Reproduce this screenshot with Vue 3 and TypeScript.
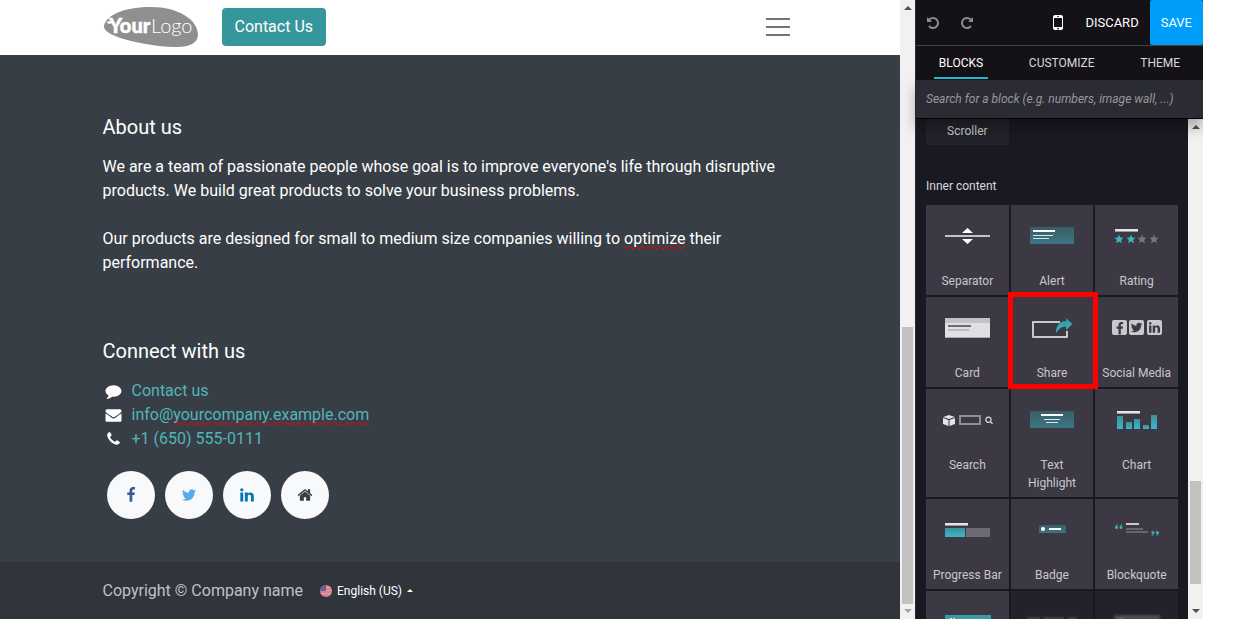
<script setup lang="ts">
import { ref } from 'vue'

interface Block {
  id: string
  label: string
  disabled?: boolean
}

const tabs = ['BLOCKS', 'CUSTOMIZE', 'THEME']
const activeTab = ref('BLOCKS')
const query = ref('')
const selected = 'share'

const blocks: Block[] = [
  { id: 'separator', label: 'Separator' },
  { id: 'alert', label: 'Alert' },
  { id: 'rating', label: 'Rating' },
  { id: 'card', label: 'Card' },
  { id: 'share', label: 'Share' },
  { id: 'social', label: 'Social Media' },
  { id: 'search', label: 'Search' },
  { id: 'highlight', label: 'Text Highlight' },
  { id: 'chart', label: 'Chart' },
  { id: 'progress', label: 'Progress Bar' },
  { id: 'badge', label: 'Badge' },
  { id: 'quote', label: 'Blockquote' },
  { id: 'banner', label: '' },
  { id: 'locked-a', label: '', disabled: true },
  { id: 'locked-b', label: '', disabled: true },
]

const icons = {
  comment:
    'M1792 896q0 174-120 321.5t-326 233-450 85.5q-70 0-145-8-198 175-460 242-49 14-114 22-17 2-30.5-9t-17.5-29v-1q-3-4-.5-12t2-10 4.5-9.5l6-9 7-8.5 8-9q7-8 31-34.5t34.5-38 31-39.5 32.5-51 27-59 26-76q-157-89-247.5-220t-90.5-281q0-130 71-248.500t191-204.500 286-136.500 348-50.500q244 0 450 85.500t326 233 120 321.500z',
  envelope:
    'M1792 710v794q0 66-47 113t-113 47h-1472q-66 0-113-47t-47-113v-794q44 49 101 87 362 246 497 345 57 42 92.500 65.500t94.500 48 110 24.500h2q51 0 110-24.500t94.500-48 92.500-65.500q170-123 498-345 57-39 100-87zm0-294q0 79-49 151t-122 123q-376 261-468 325-10 7-42.500 31t-54 38.500-52 32.500-57.500 27-50 9h-2q-23 0-50-9t-57.500-27-52-32.500-54-38.500-42.500-31q-91-64-262-182.500t-205-142.500q-62-42-117-115.500t-55-136.500q0-78 41.500-130t118.500-52h1472q65 0 112.500 47t47.500 113z',
  phone:
    'M1600 1240q0 27-10 70.500t-21 68.500q-21 50-122 106-94 51-186 51-27 0-53-3.500t-57.500-12.500-47-14.500-55.500-20.500-49-18q-98-35-175-83-127-79-264-216t-216-264q-48-77-83-175-3-9-18-49t-20.500-55.500-14.500-47-12.500-57.500-3.500-53q0-92 51-186 56-101 106-122 25-11 68.500-21t70.500-10q14 0 21 3 18 6 53 76 11 19 30 54t35 63.500 31 53.500q3 4 17.500 25t21.500 35.500 7 28.500q0 20-28.500 50t-62 55-62 53-28.500 46q0 9 5 22.500t8.500 20.500 14 24 11.500 19q76 137 174 235t235 174q2 1 19 11.500t24 14 20.500 8.500 22.500 5q18 0 46-28.500t53-62 55-62 50-28.500q14 0 28.500 7t35.500 21.500 25 17.500q25 15 53.500 31t63.500 35 54 30q70 35 76 53 3 7 3 21z',
  facebook:
    'M1343 12v264h-157q-86 0-116 36t-30 108v189h293l-39 296h-254v759h-306v-759h-255v-296h255v-218q0-186 104-288.500t277-102.500q147 0 228 12z',
  twitter:
    'M1684 408q-67 98-162 167 1 14 1 42 0 130-38 259.500t-115.500 248.500-184.500 210.500-258 146-323 54.500q-271 0-496-145 35 4 78 4 225 0 401-138-105-2-188-64.500t-114-159.500q33 5 61 5 43 0 85-11-112-23-185.500-111.500t-73.500-205.500v-4q68 38 146 41-66-44-105-115t-39-154q0-88 44-163 121 149 294.500 238.500t371.500 99.500q-8-38-8-74 0-134 94.500-228.500t228.500-94.500q140 0 236 102 109-21 205-78-37 115-142 178 93-10 186-50z',
  linkedin:
    'M477 625v991h-330v-991h330zm21-306q1 73-50.500 122t-135.500 49h-2q-82 0-132-49t-50-122q0-74 51.500-122.500t134.500-48.500 133 48.500 51 122.500zm1166 729v568h-329v-530q0-105-40.500-164.500t-126.500-59.500q-63 0-105.500 34.500t-63.500 85.500q-11 30-11 81v553h-329q2-399 2-647t-1-296l-1-48h329v144h-2q20-32 41-56t56.500-52 87-43.500 114.500-15.500q171 0 275 113.500t104 332.500z',
  home:
    'M1472 992v480q0 26-19 45t-45 19h-384v-384h-256v384h-384q-26 0-45-19t-19-45v-480q0-1 .5-3t.5-3l575-474 575 474q1 2 1 6zm223-69l-62 74q-8 9-21 11h-3q-13 0-21-7l-692-577-692 577q-12 8-24 7-13-2-21-11l-62-74q-8-10-7-23.500t11-21.500l719-599q32-26 76-26t76 26l244 204v-195q0-14 9-23t23-9h192q14 0 23 9t9 23v408l219 182q10 8 11 21.500t-7 23.500z',
  undo:
    'M1664 896q0 156-61 298t-164 245-245 164-298 61q-172 0-327-72.500t-264-204.500q-7-10-6.500-22.500t8.500-20.500l137-138q10-9 25-9 16 2 23 12 73 95 179 147t225 52q104 0 198.500-40.500t163.500-109.500 109.500-163.500 40.500-198.500-40.500-198.500-109.500-163.500-163.500-109.500-198.500-40.500q-98 0-188 35.500t-160 101.500l137 138q31 30 14 69-17 40-59 40h-448q-26 0-45-19t-19-45v-448q0-42 40-59 39-17 69 14l130 129q107-101 244.500-156.500t284.500-55.500q156 0 298 61t245 164 164 245 61 298z',
  search:
    'M1216 832q0-185-131.500-316.500t-316.500-131.500-316.500 131.500-131.500 316.500 131.500 316.500 316.500 131.500 316.500-131.500 131.500-316.500zm512 832q0 52-38 90t-90 38q-54 0-90-38l-343-342q-179 124-399 124-143 0-273.500-55.500t-225-150-150-225-55.500-273.500 55.500-273.500 150-225 225-150 273.500-55.500 273.500 55.500 225 150 150 225 55.500 273.500q0 220-124 399l343 343q37 37 37 90z',
}

const socials = [
  { name: 'Facebook', path: icons.facebook, color: '#3b5998' },
  { name: 'Twitter', path: icons.twitter, color: '#55acee' },
  { name: 'LinkedIn', path: icons.linkedin, color: '#0976b4' },
  { name: 'Home', path: icons.home, color: '#383e45' },
]

const stars = [24, 36, 47, 59]
const bars = [
  { x: 22, top: 27 },
  { x: 31, top: 33 },
  { x: 39, top: 30 },
  { x: 48, top: 36 },
  { x: 56, top: 26 },
]
</script>

<template>
  <div class="app">
    <div class="site">
      <header class="site-header">
        <div class="container nav">
          <a href="#" class="logo" aria-label="Your Logo">
            <svg width="95" height="42" viewBox="0 0 95 42">
              <path
                d="M1 20C3 8 24 1 48 1c28 0 47 13 47 28 0 8-9 12-20 12C48 41-1 31 1 20z"
                fill="#8f8f8f"
              />
              <path d="M3 16l4-1 3 2-4 1z" fill="#fff" />
              <text x="6" y="27" class="logo-bold">Your</text>
              <text x="48" y="27" class="logo-light">Logo</text>
            </svg>
          </a>
          <a href="#contact" class="cta">Contact Us</a>
          <button class="burger" type="button" aria-label="Menu"><i /><i /><i /></button>
        </div>
      </header>

      <main class="site-main">
        <div class="container">
          <section class="about">
            <h2>About us</h2>
            <p>
              We are a team of passionate people whose goal is to improve everyone's life through
              disruptive products. We build great products to solve your business problems.
            </p>
            <p>
              Our products are designed for small to medium size companies willing to
              <span class="misspelt">optimize</span> their performance.
            </p>
          </section>
          <section>
            <h2>Connect with us</h2>
            <ul class="contacts">
              <li>
                <svg viewBox="0 0 1792 1792"><path :d="icons.comment" /></svg>
                <a href="#contact">Contact us</a>
              </li>
              <li>
                <svg viewBox="0 0 1792 1792"><path :d="icons.envelope" /></svg>
                <a href="#mail">info@<span class="misspelt">yourcompany.example.com</span></a>
              </li>
              <li>
                <svg viewBox="0 0 1792 1792"><path :d="icons.phone" /></svg>
                <a href="#phone">+1 (650) 555-0111</a>
              </li>
            </ul>
            <div class="socials">
              <a v-for="s in socials" :key="s.name" href="#" :aria-label="s.name">
                <svg viewBox="0 0 1792 1792"><path :d="s.path" :fill="s.color" /></svg>
              </a>
            </div>
          </section>
        </div>
      </main>

      <footer class="site-footer">
        <div class="container legal">
          <span>Copyright © Company name</span>
          <button class="lang" type="button">
            <svg class="flag" viewBox="0 0 12 12">
              <clipPath id="flag-clip"><circle cx="6" cy="6" r="6" /></clipPath>
              <g clip-path="url(#flag-clip)">
                <rect width="12" height="12" fill="#dd7f8a" />
                <path d="M0 2.500h12M0 5.500h12M0 8.500h12" stroke="#dfa5ad" />
                <rect width="6" height="6" fill="#62648f" />
              </g>
            </svg>
            English (US)
            <svg class="caret" viewBox="0 0 6 3"><path d="M0 3l3-3 3 3z" fill="#fff" /></svg>
          </button>
        </div>
      </footer>
    </div>

    <div class="scrollbar" aria-hidden="true">
      <svg viewBox="0 0 8 4"><path d="M0 4l4-4 4 4z" /></svg>
      <div class="track site-track"><i /></div>
      <svg viewBox="0 0 8 4" class="dim"><path d="M0 0l4 4 4-4z" /></svg>
    </div>

    <aside class="editor">
      <div class="toolbar">
        <button class="tool" type="button" aria-label="Undo">
          <svg viewBox="0 0 1792 1792"><path :d="icons.undo" /></svg>
        </button>
        <button class="tool" type="button" aria-label="Redo">
          <svg viewBox="0 0 1792 1792" class="flip"><path :d="icons.undo" /></svg>
        </button>
        <button class="device" type="button" aria-label="Mobile preview">
          <svg viewBox="0 0 10 15">
            <path
              fill-rule="evenodd"
              d="M2 0h6a2 2 0 0 1 2 2v11a2 2 0 0 1-2 2H2a2 2 0 0 1-2-2V2a2 2 0 0 1 2-2zM1 3v9h8V3zM4 1v.8h2V1zM5 12.700a.8.8 0 1 0 .01 0z"
              fill="#fff"
            />
          </svg>
        </button>
        <button class="text-btn" type="button">DISCARD</button>
        <button class="text-btn save" type="button">SAVE</button>
      </div>

      <nav class="tabs">
        <button
          v-for="t in tabs"
          :key="t"
          type="button"
          :class="{ active: t === activeTab }"
          @click="activeTab = t"
        >
          {{ t }}
        </button>
      </nav>

      <div class="search">
        <input
          v-model="query"
          type="text"
          aria-label="Search for a block"
          placeholder="Search for a block (e.g. numbers, image wall, ...)"
        />
      </div>

      <div class="panel">
        <div class="panel-body">
          <div class="grid">
            <button class="tile tile-cut" type="button" disabled>Scroller</button>
          </div>
          <h3>Inner content</h3>
          <div class="grid">
            <button
              v-for="b in blocks"
              :key="b.id"
              class="tile"
              type="button"
              :disabled="b.disabled"
              :aria-label="b.label || b.id"
              :class="{ selected: b.id === selected }"
            >
              <svg class="thumb" viewBox="0 0 82 60">
                <defs>
                  <linearGradient :id="'soft-' + b.id" x1="0" y1="0" x2="0" y2="1">
                    <stop offset="0" stop-color="#395e66" />
                    <stop offset="1" stop-color="#3b7684" />
                  </linearGradient>
                  <linearGradient :id="'teal-' + b.id" x1="0" y1="0" x2="0" y2="1">
                    <stop offset="0" stop-color="#3b9295" />
                    <stop offset="1" stop-color="#39b7cb" />
                  </linearGradient>
                </defs>

                <g v-if="b.id === 'separator'">
                  <rect x="19" y="30" width="45" height="2" fill="#c4c3c8" />
                  <path d="M36 28l5.500-5 5.500 5zM36 34h11l-5.500 5z" fill="#fff" />
                </g>

                <g v-else-if="b.id === 'alert'">
                  <rect x="19" y="22" width="44" height="17" rx="1" :fill="`url(#soft-${b.id})`" />
                  <rect x="22" y="25" width="22" height="2" fill="#fff" />
                  <rect x="22" y="30" width="20" height="1" fill="#dfe6e8" />
                  <rect x="22" y="33" width="16" height="1" fill="#dfe6e8" />
                </g>

                <g v-else-if="b.id === 'rating'">
                  <rect x="20" y="24" width="23" height="3" fill="#9b99a0" />
                  <rect x="20" y="24" width="23" height="2" fill="#e4e3e6" />
                  <path
                    v-for="(s, i) in stars"
                    :key="s"
                    :transform="`translate(${s} 34)`"
                    d="M0-4.500l1.300 3 3.200.3-2.400 2.100.8 3.300L0 2.500l-2.900 1.700.8-3.300-2.400-2.100 3.200-.3z"
                    :fill="i < 2 ? '#3fb4c0' : '#77757d'"
                  />
                </g>

                <g v-else-if="b.id === 'card'">
                  <rect x="19" y="21" width="45" height="20" fill="#e0e0e2" />
                  <rect x="19" y="21" width="45" height="5" fill="#c3c2c6" />
                  <rect x="19" y="40" width="45" height="1" fill="#aaa9ad" />
                  <rect x="22" y="28" width="23" height="2" fill="#6d6c73" />
                  <rect x="22" y="32" width="21" height="2" fill="#bdbcc0" />
                </g>

                <g v-else-if="b.id === 'share'">
                  <path
                    d="M49 25H22v15h34v-6"
                    fill="none"
                    stroke="#c9c8cc"
                    stroke-width="2"
                    stroke-linejoin="round"
                  />
                  <path
                    d="M45 36c0-7 3-12 10-12v-3l6.500 6-6.500 6v-3.500c-4 0-7 2-10 6.500z"
                    :fill="`url(#teal-${b.id})`"
                  />
                </g>

                <g v-else-if="b.id === 'social'" fill="#c9c8cc">
                  <rect x="17" y="23" width="15" height="15" rx="2" />
                  <rect x="34" y="23" width="15" height="15" rx="2" />
                  <rect x="52" y="23" width="15" height="15" rx="2" />
                  <g fill="#3c3944">
                    <g transform="translate(18 25) scale(.0075)"><path :d="icons.facebook" /></g>
                    <g transform="translate(35 24) scale(.0073)"><path :d="icons.twitter" /></g>
                    <g transform="translate(53 24) scale(.0072)"><path :d="icons.linkedin" /></g>
                  </g>
                </g>

                <g v-else-if="b.id === 'search'">
                  <path d="M17 28l6-2 6 2-6 2zM17 29l5.500 2v6L17 35zM29 29l-5.500 2v6l5.500-2z" fill="#e4e3e6" />
                  <rect x="34" y="27" width="20" height="8" fill="none" stroke="#8f8d94" stroke-width="2" />
                  <g transform="translate(59 27) scale(.0045)"><path :d="icons.search" fill="#e4e3e6" /></g>
                </g>

                <g v-else-if="b.id === 'highlight'">
                  <rect x="19" y="22" width="44" height="17" rx="1" :fill="`url(#soft-${b.id})`" />
                  <rect x="30" y="25" width="22" height="2" fill="#fff" />
                  <rect x="33" y="30" width="16" height="1" fill="#dfe6e8" />
                  <rect x="35" y="33" width="12" height="1" fill="#dfe6e8" />
                </g>

                <g v-else-if="b.id === 'chart'">
                  <rect x="22" y="22" width="23" height="3" fill="#9b99a0" />
                  <rect x="22" y="22" width="23" height="2" fill="#e4e3e6" />
                  <rect
                    v-for="r in bars"
                    :key="r.x"
                    :x="r.x"
                    :y="r.top"
                    width="6"
                    :height="40 - r.top"
                    :fill="`url(#teal-${b.id})`"
                  />
                </g>

                <g v-else-if="b.id === 'progress'">
                  <rect x="19" y="24" width="23" height="3" fill="#9b99a0" />
                  <rect x="19" y="24" width="23" height="2" fill="#e4e3e6" />
                  <rect x="40" y="29" width="24" height="9" fill="#6d6b72" />
                  <rect x="19" y="29" width="20" height="9" :fill="`url(#teal-${b.id})`" />
                </g>

                <g v-else-if="b.id === 'badge'">
                  <rect x="28" y="26" width="27" height="8" rx="1" :fill="`url(#soft-${b.id})`" />
                  <circle cx="32" cy="30" r="2" fill="#fff" />
                  <rect x="38" y="29" width="12" height="2" fill="#fff" />
                </g>

                <g v-else-if="b.id === 'quote'">
                  <path
                    id="quote-mark"
                    d="M23 25c-2 .6-3 2-3 3.500a1.600 1.600 0 1 0 1.800-1.600c0-.7.500-1.200 1.200-1.500zM27.500 25c-2 .6-3 2-3 3.500a1.600 1.600 0 1 0 1.800-1.600c0-.7.500-1.200 1.200-1.500z"
                    fill="#3fa9b4"
                  />
                  <use href="#quote-mark" transform="rotate(180 42 31)" />
                  <rect x="31" y="24" width="13" height="2" fill="#c9c8cc" />
                  <rect x="31" y="29" width="17" height="2" fill="#67656d" />
                  <rect x="31" y="32" width="22" height="2" fill="#67656d" />
                </g>

                <g v-else-if="b.id === 'banner'">
                  <rect x="19" y="24" width="46" height="20" fill="#3a9ba1" />
                  <path d="M24 29v-1l1-1h1v2zM27 29v-1l1-1h1v2z" fill="#fff" />
                </g>

                <g v-else-if="b.id === 'locked-a'" class="hazy" fill="#414047">
                  <rect x="16" y="26" width="13" height="10" />
                  <rect x="32" y="26" width="21" height="10" />
                  <rect x="57" y="26" width="9" height="10" />
                </g>

                <g v-else class="hazy">
                  <rect x="19" y="24" width="46" height="20" fill="#4c4b51" />
                  <rect x="23" y="27" width="7" height="3" fill="#6b6a70" />
                </g>
              </svg>
              <span>{{ b.label }}</span>
            </button>
          </div>
        </div>

        <div class="scrollbar" aria-hidden="true">
          <svg viewBox="0 0 8 4"><path d="M0 4l4-4 4 4z" /></svg>
          <div class="track panel-track"><i /></div>
          <svg viewBox="0 0 8 4"><path d="M0 0l4 4 4-4z" /></svg>
        </div>
      </div>
    </aside>
  </div>
</template>

<style>
body {
  margin: 0;
  background: #fff;
}
</style>

<style scoped>
.app {
  display: flex;
  height: calc(100vh - 8px);
  margin-right: 32px;
  overflow: hidden;
  font-family: Roboto, "Liberation Sans", sans-serif;
  font-size: 16px;
  line-height: 24px;
}
.app *,
.app *::before,
.app *::after {
  box-sizing: border-box;
}
button {
  margin: 0;
  padding: 0;
  border: 0;
  background: none;
  color: inherit;
  font: inherit;
}
a {
  text-decoration: none;
}
svg {
  display: block;
  flex: none;
}

/* Website preview */
.site {
  flex: 1;
  min-width: 0;
  display: flex;
  flex-direction: column;
  background: #383e45;
  color: #fff;
}
.container {
  max-width: 719px;
  margin: 0 auto;
  padding: 0 12px;
}
.site-header {
  background: #fff;
}
.nav {
  display: flex;
  align-items: center;
  height: 55px;
  padding-bottom: 2px;
}
.logo-bold,
.logo-light {
  font-family: Lato, sans-serif;
  font-size: 20px;
  fill: #fff;
}
.logo-bold {
  font-weight: 900;
  stroke: #fff;
  stroke-width: 0.5px;
}
.logo-light {
  font-weight: 300;
}
.cta {
  margin-left: 24px;
  padding: 7px 13px;
  border-radius: 4px;
  background: #35979c;
  color: #fff;
}
.burger {
  display: flex;
  flex-direction: column;
  gap: 6px;
  width: 24px;
  margin-left: auto;
  margin-right: 8px;
}
.burger i {
  height: 2px;
  background: #737373;
}
.site-main {
  flex: 1;
  padding-top: 60px;
}
h2 {
  margin: 0 0 16px;
  font-size: 20px;
  font-weight: 400;
  line-height: 24px;
}
.about {
  margin-bottom: 64px;
}
p {
  margin: 0;
}
p + p {
  margin-top: 24px;
}
.misspelt {
  text-decoration-line: spelling-error;
}
.contacts {
  margin: 0;
  padding: 0;
  list-style: none;
}
.contacts li {
  display: flex;
  align-items: center;
  gap: 8px;
}
.contacts svg {
  width: 21px;
  height: 16px;
  fill: #fff;
}
.contacts a {
  color: #52b5ba;
}
.socials {
  display: flex;
  gap: 10px;
  padding: 20px 4px 0;
}
.socials a {
  display: grid;
  place-items: center;
  width: 48px;
  height: 48px;
  border-radius: 50%;
  background: #f8f9fa;
}
.socials svg {
  width: 16px;
  height: 16px;
}
.site-footer {
  background: #30343b;
}
.legal {
  display: flex;
  align-items: center;
  height: 57px;
  gap: 17px;
  color: #c0c1c4;
}
.lang {
  display: flex;
  align-items: center;
  gap: 5px;
  color: #fff;
  font-size: 12px;
}
.flag {
  width: 12px;
  height: 12px;
}
.caret {
  width: 6px;
  height: 3px;
}

/* Scrollbars */
.scrollbar {
  flex: none;
  width: 15px;
  display: flex;
  flex-direction: column;
  align-items: center;
  justify-content: space-between;
  padding: 6px 0;
  background: #f1f1f1;
}
.scrollbar > svg {
  width: 8px;
  height: 4px;
  fill: #505050;
}
.scrollbar > svg.dim {
  fill: #a3a3a3;
}
.track {
  flex: 1;
  display: flex;
  flex-direction: column;
  justify-content: flex-end;
  margin: 5px 0;
}
.track i {
  width: 11px;
  background: #c1c1c1;
}
.site-track i {
  height: 47%;
}
.panel-track i {
  height: 22%;
  margin-bottom: 20px;
}

/* Editor */
.editor {
  flex: none;
  width: 288px;
  display: flex;
  flex-direction: column;
  background: #191922;
  color: #d9d9d9;
  font-size: 12px;
  line-height: 18px;
  border-left: 1px solid #2b2b33;
}
.toolbar {
  display: flex;
  align-items: center;
  height: 46px;
  border-bottom: 1px solid #404045;
  background: #141217;
}
.tool {
  width: 34px;
  display: grid;
  place-items: center;
}
.tool svg {
  width: 14px;
  height: 14px;
  fill: #8d8c8f;
}
.flip {
  transform: scaleX(-1);
}
.device {
  margin-left: auto;
  padding: 0 11px;
}
.device svg {
  width: 10px;
  height: 15px;
}
.text-btn {
  align-self: stretch;
  padding: 0 11px;
  color: #fff;
  font-size: 13px;
}
.save {
  border-radius: 2px;
  background: #009efb;
}
.tabs {
  display: flex;
  justify-content: space-around;
  height: 34px;
  background: #141217;
}
.tabs button {
  padding: 2px 5px 0;
  margin-bottom: 1px;
  border-bottom: 2px solid transparent;
}
.tabs .active {
  border-color: #1fbcd2;
  color: #fff;
}
.search {
  position: relative;
  z-index: 1;
  border-bottom: 1px solid #000;
  background: #2b2b33;
  box-shadow: 0 8px 14px rgba(0, 0, 0, 0.3);
}
.search input {
  display: block;
  width: 100%;
  height: 38px;
  padding: 0 10px;
  border: 0;
  outline: 0;
  background: none;
  color: #fff;
  font: italic 12px Roboto, "Liberation Sans", sans-serif;
}
.search input::placeholder {
  color: #98989c;
  opacity: 1;
}
.panel {
  flex: 1;
  min-height: 0;
  display: flex;
  overflow: hidden;
}
.panel-body {
  flex: 1;
  min-width: 0;
  padding: 0 10px;
  overflow: hidden;
}
h3 {
  margin: 32px 0 10px;
  font-size: 12px;
  font-weight: 400;
}
.grid {
  display: grid;
  grid-template-columns: repeat(3, minmax(0, 1fr));
  gap: 2px;
}
.tile {
  position: relative;
  display: flex;
  flex-direction: column;
  align-items: center;
  min-height: 90px;
  padding-bottom: 5px;
  background: #3c3944;
  color: #c8c7cb;
}
.tile:disabled {
  background: #22222a;
}
.tile-cut {
  min-height: 0;
  padding-top: 3px;
}
.tile > span {
  padding: 0 6px;
}
.thumb {
  align-self: flex-start;
  width: 82px;
  height: 60px;
  margin-bottom: 7px;
}
.hazy {
  filter: blur(1px);
}
.selected::after {
  content: "";
  position: absolute;
  inset: -5px -5px -2px -3px;
  z-index: 1;
  border: 5px solid #fe0000;
}
</style>
